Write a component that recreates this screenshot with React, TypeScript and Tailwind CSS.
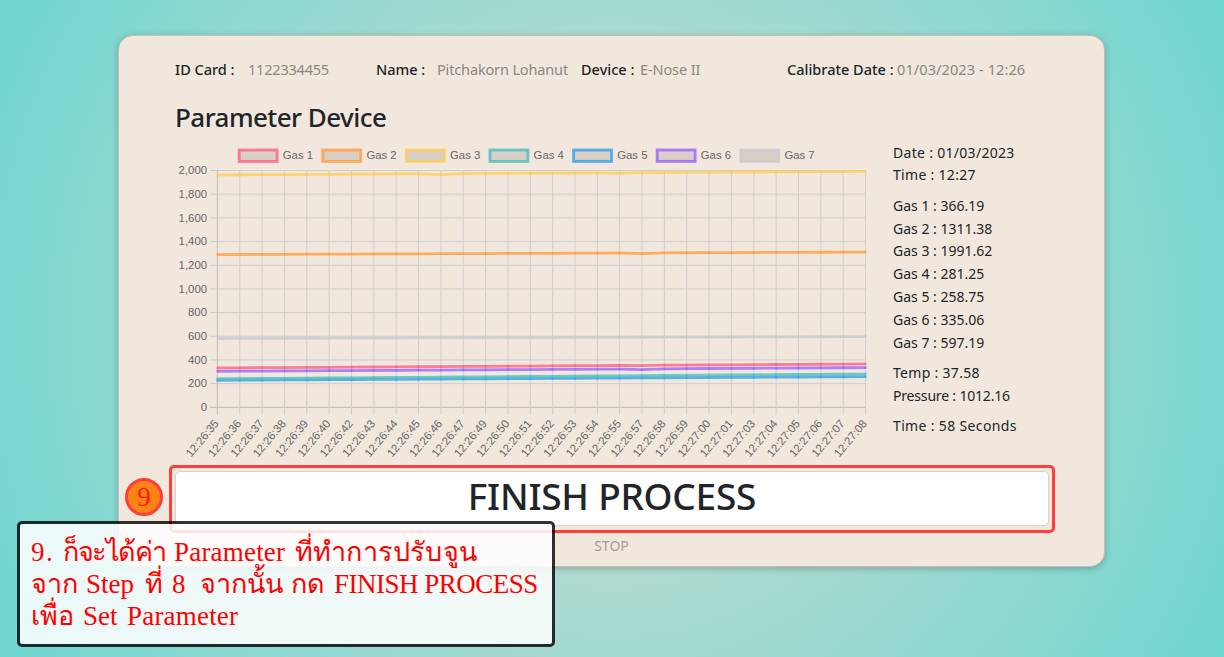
import React from "react";

const LABELS = [
  "12:26:35", "12:26:36", "12:26:37", "12:26:38", "12:26:39", "12:26:40", "12:26:42", "12:26:43", "12:26:44", "12:26:45",
  "12:26:46", "12:26:47", "12:26:49", "12:26:50", "12:26:51", "12:26:52", "12:26:53", "12:26:54", "12:26:55", "12:26:57",
  "12:26:58", "12:26:59", "12:27:00", "12:27:01", "12:27:03", "12:27:04", "12:27:05", "12:27:06", "12:27:07", "12:27:08",
];

interface Series {
  name: string;
  color: string;
  from: number;
  to: number;
  dips?: Record<number, number>;
}

const SERIES: Series[] = [
  { name: "Gas 1", color: "rgb(255,99,132)", from: 332, to: 366, dips: { 19: -3 } },
  { name: "Gas 2", color: "rgb(255,159,64)", from: 1290, to: 1311, dips: { 19: -6 } },
  { name: "Gas 3", color: "rgb(255,205,86)", from: 1963, to: 1992, dips: { 10: -7, 18: -4 } },
  { name: "Gas 4", color: "rgb(75,192,192)", from: 241, to: 281 },
  { name: "Gas 5", color: "rgb(54,162,235)", from: 228, to: 259 },
  { name: "Gas 6", color: "rgb(153,102,255)", from: 304, to: 335, dips: { 19: -6 } },
  { name: "Gas 7", color: "rgb(201,203,207)", from: 581, to: 597 },
];

// Plot area in the chart's own coordinates
const X0 = 42.4;
const STEP = 22.35;
const Y0 = 263.3;
const UNIT = 0.1184;
const xAt = (i: number) => X0 + i * STEP;
const yAt = (v: number) => Y0 - v * UNIT;

function Chart() {
  return (
    <svg width="700" height="320" viewBox="0 0 700 320" className="block shrink-0" fontFamily="Liberation Sans, Arial, sans-serif" fontSize="11.35" fill="#666">
      {SERIES.map((s, i) => (
        <g key={s.name}>
          <rect x={64.2 + i * 83.6} y={6} width={37.9} height={11.4} fill="rgba(0,0,0,0.1)" stroke={s.color} strokeOpacity={0.82} strokeWidth={2.9} />
          <text x={107.8 + i * 83.6} y={15.2}>{s.name}</text>
        </g>
      ))}
      {Array.from({ length: 11 }, (_, i) => (
        <g key={i}>
          <line x1={34.8} x2={X0 + STEP * 29} y1={yAt(i * 200)} y2={yAt(i * 200)} stroke={i === 0 ? "#b9b9b8" : "#cfcecd"} strokeWidth={1} />
          <text x={32} y={yAt(i * 200) + 3.8} textAnchor="end">{(i * 200).toLocaleString("en-US")}</text>
        </g>
      ))}
      {LABELS.map((l, i) => (
        <g key={l}>
          <line x1={xAt(i)} x2={xAt(i)} y1={yAt(2000)} y2={Y0 + 7.6} stroke={i === 0 ? "#bdbdbc" : "#cfcecd"} strokeWidth={1} />
          <text textAnchor="end" transform={`translate(${xAt(i) + 2} ${Y0 + 16.6}) rotate(-50)`}>{l}</text>
        </g>
      ))}
      {[...SERIES].reverse().map((s) => {
        const pts = LABELS.map((_, i) => [xAt(i), yAt(s.from + ((s.to - s.from) * i) / 29 + (s.dips?.[i] ?? 0))]);
        return (
          <g key={s.name} stroke={s.color} fill="none">
            <polyline points={pts.map((p) => p.join(",")).join(" ")} strokeWidth={2.8} strokeOpacity={0.8} />
            {pts.map((p) => (
              <circle key={p[0]} cx={p[0]} cy={p[1]} r={1.3} fill={s.color} fillOpacity={0.7} stroke="none" />
            ))}
          </g>
        );
      })}
    </svg>
  );
}

const READINGS = [
  { group: "mb-[8.9px] leading-[22px] tracking-[0.3px]", rows: ["Date : 01/03/2023", "Time : 12:27"] },
  { group: "mb-[8px]", rows: ["Gas 1 : 366.19", "Gas 2 : 1311.38", "Gas 3 : 1991.62", "Gas 4 : 281.25", "Gas 5 : 258.75", "Gas 6 : 335.06", "Gas 7 : 597.19"] },
  { group: "tracking-[0.3px]", rows: ["Temp : 37.58"] },
  { group: "mb-[7px] tracking-[-0.18px]", rows: ["Pressure : 1012.16"] },
  { group: "tracking-[0.35px]", rows: ["Time : 58 Seconds"] },
];

function Callout() {
  return (
    <div className="absolute top-[521px] left-[17px] h-[126px] w-[538px] rounded-[5px] border-3 border-black/80 bg-white/85 bg-clip-padding pt-[12px] pl-[11px] font-['Liberation_Serif',serif] text-[27px] leading-[32px] whitespace-nowrap text-[#ff0000]">
      <div className="flex">
        <span className="w-[32px] tracking-[1.5px]">9.</span>
        <span className="w-[111px] tracking-[-1.4px]">ก็จะได้ค่า</span>
        <span className="w-[121px] tracking-[0.2px]">Parameter</span>
        <span className="tracking-[0.2px]">ที่ทำการปรับจูน</span>
      </div>
      <div className="flex">
        <span className="w-[55px]">จาก</span>
        <span className="w-[59px]">Step</span>
        <span className="w-[27px]">ที่</span>
        <span className="w-[28px]">8</span>
        <span className="w-[91px]">จากนั้น</span>
        <span className="w-[43px]">กด</span>
        <span className="tracking-[-0.5px]">FINISH PROCESS</span>
      </div>
      <div className="flex">
        <span className="w-[52px]">เพื่อ</span>
        <span className="w-[44px]">Set</span>
        <span className="tracking-[0.2px]">Parameter</span>
      </div>
    </div>
  );
}

export default function App() {
  return (
    <div className="relative h-[657px] w-[1224px] overflow-hidden bg-[radial-gradient(circle_at_center,#d2ddd1_0%,#6fd6d0_100%)] pt-[35px] pl-[118px] font-['Noto_Sans',sans-serif] text-[#212529]">
      <main className="flex h-[532px] w-[987px] flex-col rounded-[15px] border border-[#c9bdb5] bg-[#f2e7dd] shadow-[0_2px_7px_rgba(0,0,0,0.22)]">
        <header className="flex h-[68px] shrink-0 items-center pl-[56px] text-[14.5px] whitespace-nowrap">
          <span className="w-[73px] font-medium">ID Card :</span>
          <span className="w-[128px] tracking-[-0.2px] text-[#8a8886]">1122334455</span>
          <span className="w-[61px] font-medium">Name :</span>
          <span className="w-[144px] tracking-[-0.15px] text-[#8a8886]">Pitchakorn Lohanut</span>
          <span className="w-[59px] font-medium">Device :</span>
          <span className="w-[147px] tracking-[-0.1px] text-[#8a8886]">E-Nose II</span>
          <span className="w-[110px] font-medium">Calibrate Date :</span>
          <span className="tracking-[0.1px] text-[#8a8886]">01/03/2023 - 12:26</span>
        </header>
        <h1 className="h-[40px] shrink-0 pl-[56px] text-[26px] leading-[26px] font-medium tracking-[-0.55px]">Parameter Device</h1>
        <section className="flex h-[321px] shrink-0 pl-[56px]">
          <Chart />
          <div className="-mt-[2px] ml-[18px] text-[14px] leading-[22.8px] whitespace-nowrap">
            {READINGS.map(({ group, rows }) => (
              <div key={rows[0]} className={group}>
                {rows.map((r) => (
                  <p key={r}>{r}</p>
                ))}
              </div>
            ))}
          </div>
        </section>
        <div className="ml-[50px] h-[68px] w-[886px] shrink-0 rounded-[5px] border-3 border-[#ff3d3d] p-[3px]">
          <button className="flex h-[55px] w-[874px] items-center justify-center rounded-[5px] border border-[#d8d2cc] bg-white pb-[5px] text-[37px] font-medium tracking-[-0.25px]">
            FINISH PROCESS
          </button>
        </div>
        <button className="h-[25px] w-full text-[14px] text-[#a49e98]">STOP</button>
      </main>
      <div className="absolute top-[478px] left-[125px] flex h-[38px] w-[38px] items-center justify-center rounded-full border-3 border-[#ff3d3d] bg-[#f98314] font-['Liberation_Serif',serif] text-[27px] leading-none text-[#ff1500]">
        9
      </div>
      <Callout />
    </div>
  );
}
